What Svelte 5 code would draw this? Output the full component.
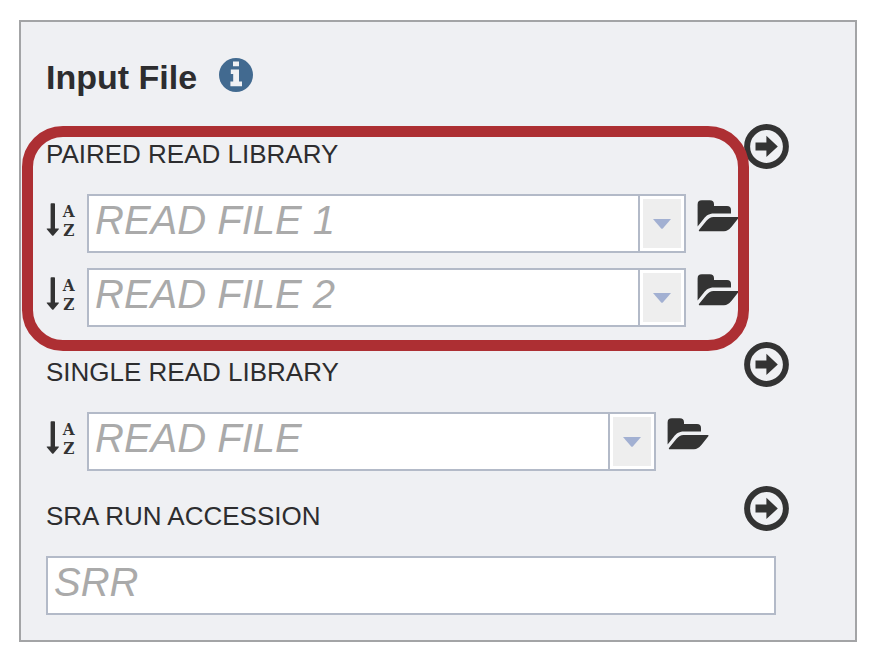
<script>
  let paired = $state(['', '']);
  let single = $state('');
  let accession = $state('');
</script>

{#snippet addButton(name)}
  <button type="button" class="icon-button" aria-label={name}>
    <svg width="45" height="45" viewBox="0 0 45 45" aria-hidden="true">
      <circle cx="22.5" cy="22.5" r="19.4" fill="none" stroke="#333" stroke-width="6" />
      <path d="M11.5 18.4H22.4V11.8L33.8 22.4 22.4 33V26.5H11.5Z" fill="#333" />
    </svg>
  </button>
{/snippet}

{#snippet sortIcon()}
  <svg class="sort" width="30" height="34" viewBox="0 0 30 34" aria-hidden="true">
    <path d="M4.6 1Q4.6 .2 5.4 .2H8.2Q9 .2 9 1V25.4H12.4Q13.4 25.4 12.8 26.3L7.5 32.4Q6.8 33 6.1 32.4L.8 26.3Q.2 25.4 1.2 25.4H4.6Z" fill="#333" />
    <text x="22.8" y="14" text-anchor="middle">A</text>
    <text x="22.8" y="33" text-anchor="middle">Z</text>
  </svg>
{/snippet}

{#snippet folderIcon()}
  <svg width="42" height="32" viewBox="0 0 42 32" fill="#333" aria-hidden="true">
    <path d="M.6 26.5V4.4Q.6 .3 4.8 .3H12.8Q17 .3 17 4.2V6H30Q34 6 34 10V13.4H17C11.5 13.4 9 15.8 7 18.5Z" />
    <path d="M2.8 31.2Q1.2 31.2 2.2 29.8L9.5 20.8Q12.5 17 16.5 17H40.8Q42.2 17 41.3 18.3L34.8 26.5Q31 31.2 27 31.2Z" />
  </svg>
{/snippet}

{#snippet comboEnd(name)}
  <button type="button" class="drop" aria-label="Show {name} options">
    <span class="face">
      <svg width="18" height="10" viewBox="0 0 18 10" aria-hidden="true">
        <path d="M0 0H18L9.8 9.4Q9 10.2 8.2 9.4Z" fill="#a2b0d2" />
      </svg>
    </span>
  </button>
{/snippet}

<main class="panel">
  <header class="title">
    <h1>Input File</h1>
    <button type="button" class="icon-button" aria-label="Input file information">
      <svg width="34" height="34" viewBox="0 0 34 34" aria-hidden="true">
        <circle cx="17" cy="17" r="17" fill="#426a90" />
        <path d="M14 3.5H20V8.3H14ZM11.8 11.4H20V23.4H23V28.2H11.4V23.4H14.2V16H11.8Z" fill="#f0f1f4" />
      </svg>
    </button>
  </header>

  <section class="group highlighted">
    <div class="heading">
      <h2>PAIRED READ LIBRARY</h2>
      {@render addButton('Add paired read library')}
    </div>
    <div class="rows">
      {#each paired as _, i}
        <div class="row">
          {@render sortIcon()}
          <div class="box combo">
            <input type="text" bind:value={paired[i]} placeholder="READ FILE {i + 1}" aria-label="Read file {i + 1}" />
            {@render comboEnd(`read file ${i + 1}`)}
          </div>
          <button type="button" class="icon-button folder" aria-label="Browse read file {i + 1}">
            {@render folderIcon()}
          </button>
        </div>
      {/each}
    </div>
  </section>

  <section class="group">
    <div class="heading">
      <label for="single">SINGLE READ LIBRARY</label>
      {@render addButton('Add single read library')}
    </div>
    <div class="row short">
      {@render sortIcon()}
      <div class="box combo">
        <input id="single" type="text" bind:value={single} placeholder="READ FILE" />
        {@render comboEnd('read file')}
      </div>
      <button type="button" class="icon-button folder" aria-label="Browse read file">
        {@render folderIcon()}
      </button>
    </div>
  </section>

  <section class="group">
    <div class="heading">
      <label for="accession">SRA RUN ACCESSION</label>
      {@render addButton('Add SRA run accession')}
    </div>
    <div class="box accession">
      <input id="accession" type="text" bind:value={accession} placeholder="SRR" />
    </div>
  </section>
</main>

<style>
  :global(body) {
    margin: 0;
    background: #fff;
  }

  .panel {
    box-sizing: border-box;
    margin: 20px 27px 24px 19px;
    padding: 36px 66px 25px 25px;
    border: 2px solid #a3a4a6;
    background: #eff0f3;
    color: #2d2d2f;
    font-family: 'Liberation Sans', Arial, sans-serif;
    display: flex;
    flex-direction: column;
    gap: 15px;
  }

  .title {
    display: flex;
    align-items: flex-start;
    gap: 22px;
    margin-bottom: 13px;
  }

  h1 {
    margin: 0;
    font-size: 34px;
    line-height: 38px;
    font-weight: bold;
  }

  h2,
  label {
    margin: 0;
    font-size: 26px;
    line-height: 30px;
    font-weight: normal;
  }

  .group {
    position: relative;
    display: flex;
    flex-direction: column;
    gap: 25px;
  }

  .highlighted::after {
    content: '';
    position: absolute;
    inset: 2px 40px -24px -24px;
    border: 11px solid #ad2f33;
    border-radius: 41px;
    pointer-events: none;
  }

  .heading {
    display: flex;
    align-items: flex-end;
    justify-content: space-between;
  }

  .rows {
    display: flex;
    flex-direction: column;
    gap: 15px;
  }

  .row {
    display: flex;
    align-items: flex-start;
    gap: 11px;
    margin-right: 50px;
  }

  .short {
    margin-right: 80px;
  }

  .icon-button {
    display: block;
    flex: none;
    padding: 0;
    border: 0;
    background: none;
    cursor: pointer;
  }

  svg {
    display: block;
  }

  .sort {
    flex: none;
    margin-top: 9px;
    overflow: visible;
  }

  .sort text {
    font: bold 17px 'DejaVu Serif Condensed', 'DejaVu Serif', serif;
    fill: #333;
  }

  .folder {
    margin-top: 6px;
  }

  .box {
    box-sizing: border-box;
    height: 59px;
    border: 2px solid #b3bac8;
    background: #fff;
    display: flex;
  }

  .combo {
    flex: 1;
    min-width: 0;
  }

  .accession {
    margin-right: 13px;
  }

  input {
    box-sizing: border-box;
    flex: 1;
    min-width: 0;
    padding: 0 6px 6px;
    border: 0;
    outline: 0;
    background: none;
    color: #2d2d2f;
    font: 40px 'Liberation Sans', Arial, sans-serif;
  }

  input::placeholder {
    color: #aaa;
    font-style: italic;
    opacity: 1;
  }

  .drop {
    box-sizing: border-box;
    flex: none;
    width: 46px;
    padding: 3px;
    border: 0;
    border-left: 2px solid #b3bac8;
    background: #fff;
    display: flex;
    cursor: pointer;
  }

  .face {
    flex: 1;
    align-self: stretch;
    display: flex;
    align-items: center;
    justify-content: center;
    background: #eee;
  }
</style>
